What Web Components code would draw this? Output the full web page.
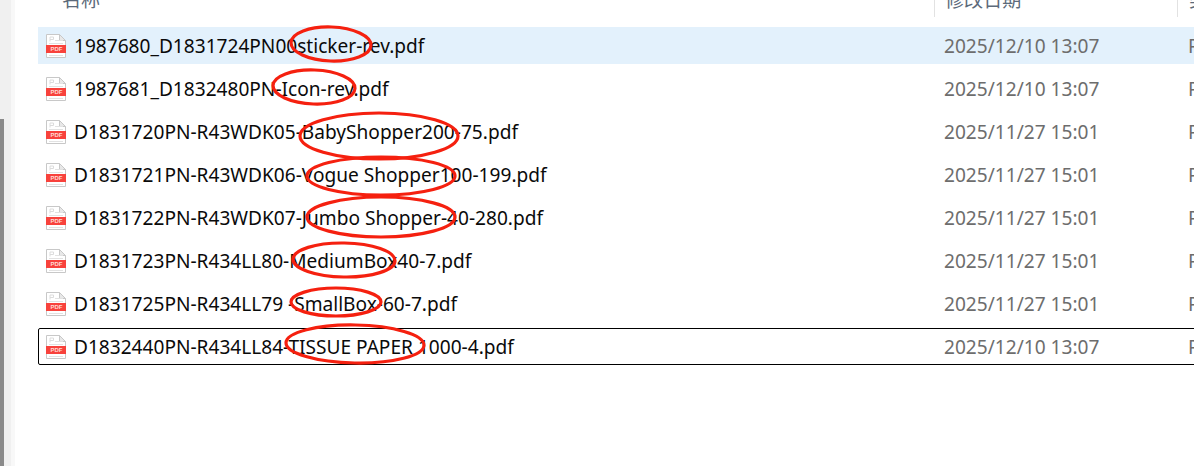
<!DOCTYPE html>
<html>
<head>
<meta charset="utf-8">
<style>
  html, body { margin: 0; height: 100%; background: #fff; overflow: hidden; }
</style>
</head>
<body>
<file-explorer>
  <file-row name="1987680_D1831724PN00sticker-rev.pdf" date="2025/12/10 13:07" state="hover"></file-row>
  <file-row name="1987681_D1832480PN-Icon-rev.pdf" date="2025/12/10 13:07"></file-row>
  <file-row name="D1831720PN-R43WDK05-BabyShopper200-75.pdf" date="2025/11/27 15:01"></file-row>
  <file-row name="D1831721PN-R43WDK06-Vogue Shopper100-199.pdf" date="2025/11/27 15:01"></file-row>
  <file-row name="D1831722PN-R43WDK07-Jumbo Shopper-40-280.pdf" date="2025/11/27 15:01"></file-row>
  <file-row name="D1831723PN-R434LL80-MediumBox40-7.pdf" date="2025/11/27 15:01"></file-row>
  <file-row name="D1831725PN-R434LL79 -SmallBox-60-7.pdf" date="2025/11/27 15:01"></file-row>
  <file-row name="D1832440PN-R434LL84-TISSUE PAPER 1000-4.pdf" date="2025/12/10 13:07" state="focus"></file-row>
</file-explorer>

<script>
class PdfIcon extends HTMLElement {
    constructor() {
        super();
        this.shadow = this.attachShadow({ mode: 'open' });
    }

    connectedCallback() {
        this.shadow.innerHTML = `
        <style>
            :host { display: block; width: 20px; height: 24px; margin-top: 1px; }
            svg { display: block; }
            text {
                fill: #ffd9d5;
                font-family: "Liberation Sans", sans-serif;
                font-size: 6px;
                font-weight: 700;
            }
        </style>
        <svg width="20" height="24" viewBox="0 0 20 24">
            <path d="M.5.5H13.5L19.5 6.5V23.5H.5Z" fill="#fff" stroke="#c8c8c8"/>
            <path d="M13.5.5V6.5H19.5Z" fill="#e8e8e8" stroke="#c8c8c8"/>
            <path d="M4 7.5V3H7.5V5.5H4" fill="none" stroke="#dcdcdc"/>
            <path d="M9 6.5H17M3 9.5H17M3 21.5H17" stroke="#e2e2e2"/>
            <rect x="0" y="11" width="20" height="8" fill="#f8423c"/>
            <text x="4.5" y="17.2">PDF</text>
        </svg>
        `;
    }
}

class FileRow extends HTMLElement {
    constructor() {
        super();
        this.shadow = this.attachShadow({ mode: 'open' });
    }

    connectedCallback() {
        this.shadow.innerHTML = `
        <style>
            :host { display: block; }
            .row {
                align-items: center;
                box-sizing: border-box;
                display: grid;
                grid-template-columns: 20px 878px 244px 1fr;
                height: 37px;
                padding-left: 8px;
                white-space: nowrap;
            }
            :host([state="hover"]) .row { background: #e3f1fc; }
            :host([state="focus"]) .row {
                border: 1px solid #000;
                border-radius: 2px;
                padding-left: 7px;
            }
            .name { color: #0a0a0a; padding-left: 8px; }
            .date, .type { color: #6d6d6d; }
        </style>
        <div class="row">
            <pdf-icon></pdf-icon>
            <span class="name">${this.getAttribute('name')}</span>
            <span class="date">${this.getAttribute('date')}</span>
            <span class="type">PDF</span>
        </div>
        `;
    }
}

class FileExplorer extends HTMLElement {
    constructor() {
        super();
        this.shadow = this.attachShadow({ mode: 'open' });
    }

    connectedCallback() {
        // hand drawn marks: cx, cy, rx, ry, tilt
        const marks = [
            [331, 44, 40, 17, 2], [314, 87, 41, 17, 2], [379, 136, 79, 23, 0], [381, 176, 74, 19, 0],
            [381, 217, 74, 20, 0], [344, 260, 51, 17, 1], [336, 302, 45, 14, 0], [355, 344, 69, 19, 1]
        ];
        this.shadow.innerHTML = `
        <style>
            :host {
                background: #fff;
                display: block;
                font-family: "Noto Sans", "Noto Sans CJK SC", sans-serif;
                font-size: 19.1px;
                height: 466px;
                overflow: hidden;
                position: relative;
                width: 1194px;
            }
            .layout { display: grid; grid-template-columns: 15px 1fr; height: 100%; }
            .rail {
                background: linear-gradient(90deg, #f0f0f0 11px, #f8f8f8 11px);
                display: flex;
                flex-direction: column;
            }
            .rail i { background: #8a8a8a; flex: 1; margin-top: 119px; width: 4px; }
            .pane { padding-left: 23px; }
            .head {
                color: #5c6a7a;
                display: grid;
                grid-template-columns: 897px 243px 1fr;
                height: 17px;
                line-height: 0;
                margin-bottom: 10px;
                overflow: hidden;
                white-space: nowrap;
            }
            .head span { border-right: 1px solid #e2e2e2; padding-left: 24px; box-sizing: border-box; }
            .head span + span { padding-left: 10px; }
            .head span:last-child { border: 0; padding-left: 11px; }
            .rows { display: flex; flex-direction: column; gap: 6px; }
            svg.ink { left: 0; pointer-events: none; position: absolute; top: 0; }
            ellipse { fill: none; stroke: #f5200f; stroke-width: 3.2; }
        </style>
        <div class="layout">
            <div class="rail"><i></i></div>
            <div class="pane">
                <div class="head"><span>名称</span><span>修改日期</span><span>类型</span></div>
                <div class="rows"><slot></slot></div>
            </div>
        </div>
        <svg class="ink" width="1194" height="466">
            ${marks.map(m => `<ellipse cx="${m[0]}" cy="${m[1]}" rx="${m[2]}" ry="${m[3]}" transform="rotate(${m[4]} ${m[0]} ${m[1]})"/>`).join('')}
        </svg>
        `;
    }
}

customElements.define('pdf-icon', PdfIcon);
customElements.define('file-row', FileRow);
customElements.define('file-explorer', FileExplorer);
</script>
</body>
</html>
